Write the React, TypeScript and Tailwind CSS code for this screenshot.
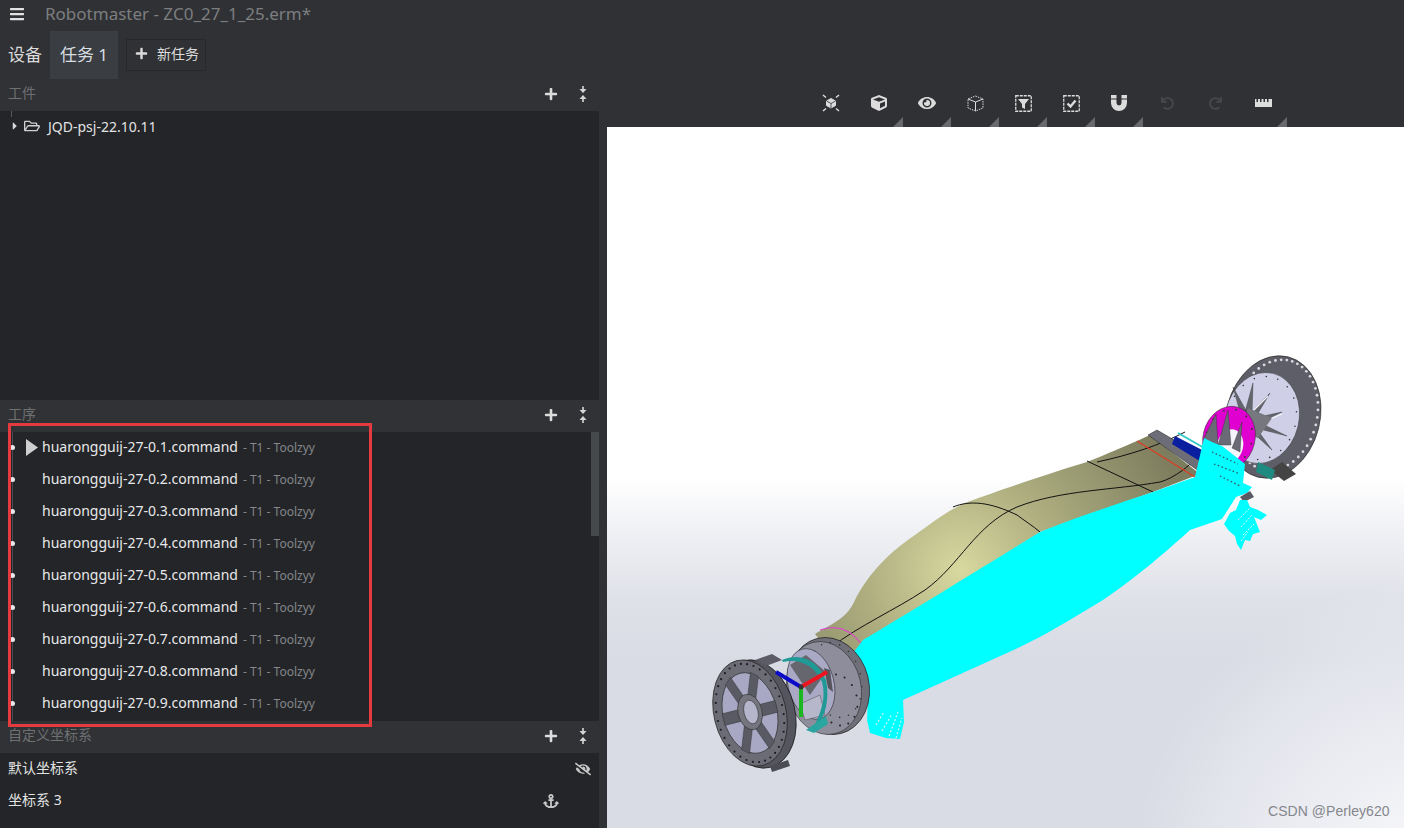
import React from "react";
import { FaBars, FaPlus, FaCube, FaEye, FaUndo, FaRedo, FaAnchor, FaEyeSlash, FaRegFolderOpen, FaCaretRight } from "react-icons/fa";

const FONT = "font-['Noto_Sans','Noto_Sans_CJK_SC',sans-serif]";

function Collapse() {
  return (
    <svg width="8" height="16" viewBox="0 0 8 16" fill="#d6d6d6">
      <rect x="3.2" y="0" width="1.6" height="3" />
      <path d="M0.5 3H7.5L4 7Z" />
      <path d="M0.5 13H7.5L4 9Z" />
      <rect x="3.2" y="13" width="1.6" height="3" />
    </svg>
  );
}

function PanelHeader({ title }: { title: string }) {
  return (
    <div className="flex h-8 shrink-0 items-center bg-[#303235] pb-0.5 pl-2">
      <span className="mb-1 text-[14px] text-[#6e7072]">{title}</span>
      <span className="ml-auto flex w-4 justify-center text-[14px] text-[#dcdcdc]">
        <FaPlus />
      </span>
      <span className="ml-4 mr-2 flex w-4 justify-center">
        <Collapse />
      </span>
    </div>
  );
}

function Row({ n, first }: { n: number; first: boolean }) {
  return (
    <div className="relative flex h-8 items-center pb-1 pl-[42px]">
      <span className="absolute left-[10px] top-[13px] h-[5px] w-[5px] rounded-full bg-[#e8e8e8]" />
      {first && (
        <svg className="absolute left-[26px] top-[7px]" width="12" height="17" viewBox="0 0 12 17">
          <path d="M0 0L12 8.5L0 17Z" fill="#cfcfcf" />
        </svg>
      )}
      <span className="text-[14px] text-[#e8e8e8]">huarongguij-27-0.{n}.command</span>
      <span className="ml-[5px] mt-1 text-[12px] text-[#85878a]">- T1 - Toolzyy</span>
    </div>
  );
}

const s = "#dcdcdc";
const tools: { el: React.ReactNode; tri: boolean }[] = [
  {
    tri: false,
    el: (
      <svg width="18" height="18" viewBox="0 0 18 18" fill="none" stroke={s}>
        <path d="M9 4.5L13.5 7V11.5L9 14L4.5 11.5V7Z" fill={s} />
        <path d="M4.5 7L9 9.5L13.5 7M9 9.5V14" stroke="#303235" strokeWidth="0.8" />
        <path d="M1 1L4 3.5M17 1L14 3.5M1 17L4 14.5M17 17L14 14.5" strokeWidth="1.5" />
      </svg>
    ),
  },
  { tri: true, el: <FaCube size={16} color={s} /> },
  { tri: true, el: <FaEye size={18} color={s} /> },
  {
    tri: true,
    el: (
      <svg width="17" height="17" viewBox="0 0 17 17" fill="none" stroke={s} strokeWidth="1">
        <path d="M8.5 1L16 4V13L8.5 16L1 13V4Z" strokeDasharray="1.5 1" />
        <path d="M1 4L8.5 7L16 4M8.5 7V16" />
      </svg>
    ),
  },
  {
    tri: true,
    el: (
      <svg width="17" height="17" viewBox="0 0 17 17" fill="none" stroke={s}>
        <rect x="0.75" y="0.75" width="15.5" height="15.5" strokeWidth="1.3" strokeDasharray="3 1" />
        <path d="M3 4H14L10 9V14L7 12.5V9Z" fill={s} stroke="none" />
      </svg>
    ),
  },
  {
    tri: true,
    el: (
      <svg width="17" height="17" viewBox="0 0 17 17" fill="none" stroke={s}>
        <rect x="0.75" y="0.75" width="15.5" height="15.5" strokeWidth="1.3" strokeDasharray="3 1" />
        <path d="M4.5 8.5L7.5 11.5L12.5 5.5" strokeWidth="2.4" />
      </svg>
    ),
  },
  {
    tri: true,
    el: (
      <svg width="18" height="16" viewBox="0 0 18 16" fill={s}>
        <path d="M1 0H6.5V3.5H1ZM11.5 0H17V3.5H11.5Z" />
        <path d="M1 4.5H6.5V8A2.5 2.5 0 0 0 11.5 8V4.5H17V8A8 8 0 0 1 1 8Z" />
      </svg>
    ),
  },
  { tri: false, el: <FaUndo size={13} color="#46484b" /> },
  { tri: false, el: <FaRedo size={13} color="#46484b" /> },
  {
    tri: true,
    el: (
      <svg width="17" height="8" viewBox="0 0 17 8" fill={s}>
        <path d="M0 0H1.5V3H3V0H5V3H6.5V0H8.5V3H10V0H12V3H13.5V0H17V8H0Z" />
      </svg>
    ),
  },
];

function ring(cx: number, cy: number, rx: number, ry: number, rot: number, n: number, r: number, fill: string) {
  const a = (rot * Math.PI) / 180;
  return Array.from({ length: n }, (_, i) => {
    const t = (i / n) * Math.PI * 2;
    const x = rx * Math.cos(t);
    const y = ry * Math.sin(t);
    return (
      <circle key={i} cx={cx + x * Math.cos(a) - y * Math.sin(a)} cy={cy + x * Math.sin(a) + y * Math.cos(a)} r={r} fill={fill} />
    );
  });
}

function Model() {
  return (
    <svg className="block h-full w-full" viewBox="607 127 797 701" preserveAspectRatio="none">
      <defs>
        <linearGradient id="bg" gradientUnits="userSpaceOnUse" x1="0" y1="127" x2="0" y2="828">
          <stop offset="0" stopColor="#ffffff" />
          <stop offset="0.5" stopColor="#ffffff" />
          <stop offset="0.58" stopColor="#eff0f4" />
          <stop offset="0.67" stopColor="#e0e2e9" />
          <stop offset="0.76" stopColor="#d9dbe5" />
          <stop offset="1" stopColor="#d9dbe5" />
        </linearGradient>
        <radialGradient id="corner" gradientUnits="userSpaceOnUse" cx="1430" cy="880" r="300">
          <stop offset="0" stopColor="#ffffff" stopOpacity="0.9" />
          <stop offset="0.45" stopColor="#f8f9fb" stopOpacity="0.6" />
          <stop offset="1" stopColor="#ffffff" stopOpacity="0" />
        </radialGradient>
        <radialGradient id="olive" gradientUnits="userSpaceOnUse" cx="960" cy="570" r="240">
          <stop offset="0" stopColor="#d8d8a0" />
          <stop offset="0.4" stopColor="#aeae80" />
          <stop offset="1" stopColor="#7c7c5e" />
        </radialGradient>
      </defs>
      <rect x="607" y="127" width="797" height="701" fill="url(#bg)" />
      <rect x="607" y="127" width="797" height="701" fill="url(#corner)" />

      {/* blade */}
      <path
        d="M815 634C835 622 847 618 855 600C866 578 885 555 915 535C932 523 945 512 965 503C1000 490 1050 473 1087 462C1105 455 1125 446 1137 441L1150 435L1200 474L1153 492L1040 532L970 580L863 645L840 665Z"
        fill="url(#olive)"
      />
      <path d="M830 648C860 625 895 610 925 590C960 565 975 525 1017 507C1060 490 1115 490 1160 482C1175 478 1190 465 1200 455" fill="none" stroke="#111" strokeWidth="1" />
      <path d="M953 507C970 500 990 502 1017 515C1025 521 1033 526 1040 532" fill="none" stroke="#111" strokeWidth="1" />
      <path d="M1087 461L1153 492" fill="none" stroke="#111" strokeWidth="1" />
      <path d="M1097 462C1130 455 1160 445 1185 432" fill="none" stroke="#111" strokeWidth="1" />
      <path d="M1137 441L1195 477" fill="none" stroke="#e03a20" strokeWidth="1.1" />
      <path d="M820 630C835 625 850 628 862 645" fill="none" stroke="#e040d0" strokeWidth="1.1" />

      {/* right hub */}
      <ellipse cx="1273" cy="417" rx="47" ry="62" transform="rotate(14 1273 417)" fill="#5e5e68" stroke="#222" strokeWidth="0.6" />
      {ring(1276, 415, 41, 56, 14, 46, 1.4, "#d8d8e0")}
      <ellipse cx="1262" cy="418" rx="37" ry="46" transform="rotate(14 1262 418)" fill="#cfcfe8" stroke="#333" strokeWidth="0.5" />
      {ring(1262, 418, 34, 42, 14, 18, 0.8, "#333")}
      <path d="M1233 387L1240 412L1248 414Z M1253 383L1245 412L1252 414Z M1270 393L1250 414L1254 420Z M1282 412L1254 418L1258 424Z M1287 436L1258 422L1256 428Z M1272 450L1254 425L1250 430Z" fill="#66666f" stroke="#333" strokeWidth="0.4" />
      <path d="M1252 412L1268 396M1258 424L1282 414" stroke="#f4f4fa" strokeWidth="1.2" />
      <path d="M1248 408L1272 418L1258 438L1240 430Z" fill="#77777f" />
      <path d="M1270 470L1282 462L1296 474L1284 481Z" fill="#444" />
      <path d="M1258 462L1275 470L1272 480L1256 472Z" fill="#1f8a80" />
      <ellipse cx="1229" cy="438" rx="26" ry="32" transform="rotate(14 1229 438)" fill="#e000d0" stroke="#333" strokeWidth="0.5" />
      <ellipse cx="1230" cy="446" rx="13" ry="17" transform="rotate(14 1230 446)" fill="#f4f4fa" />
      {ring(1229, 438, 23, 29, 14, 12, 0.9, "#333")}
      <path d="M1203 440L1216 414L1218 445ZM1218 445L1228 410L1231 445ZM1232 448L1242 422L1240 452Z" fill="#6a6a76" stroke="#333" strokeWidth="0.4" />
      <path d="M1148 435L1157 430L1212 462L1200 472Z" fill="#6d6d78" stroke="#222" strokeWidth="0.5" />
      <path d="M1175 436L1208 453L1203 463L1172 444Z" fill="#0a1ea0" />
      <path d="M1178 433L1206 449" stroke="#30c8c8" strokeWidth="2" />

      {/* toolpath */}
      <path
        d="M853 653L863 640C920 606 985 566 1040 532C1080 516 1120 503 1153 492L1195 477L1204 438L1212 442L1222 446L1245 464L1243 483L1252 487L1247 493L1236 497L1222 519L1190 530C1170 548 1140 575 1103 600C1070 620 1045 635 1020 647L903 700L904 722L900 739L886 738L870 733L867 720L868 697Z"
        fill="#00ffff"
      />
      <path d="M1212 452L1238 464M1214 464L1240 474M1220 476L1240 486" stroke="#34555a" strokeWidth="1.3" strokeDasharray="1.5 2.5" />
      <path d="M1240 497L1250 491L1254 497L1244 502Z" fill="#5a5a62" />
      <path d="M1240 500L1247 500L1250 507L1258 510L1267 515L1261 520L1254 517L1260 532L1253 534L1250 541L1245 540L1241 550L1237 544L1235 536L1229 531L1224 524L1230 513L1236 510Z" fill="#00ffff" />
      <path d="M1238 520L1250 508M1241 527L1252 515M1243 535L1254 524M1241 541L1248 532" stroke="#e8fbfc" strokeWidth="1" strokeDasharray="2 1.5" />
      <path d="M876 725L884 712M882 731L892 714M889 736L898 712M896 738L902 718" stroke="#dcf4f8" strokeWidth="1.2" strokeDasharray="2 2" />

      {/* middle hub */}
      <ellipse cx="829" cy="686" rx="40" ry="49" transform="rotate(-14 829 686)" fill="#6f6f7a" stroke="#222" strokeWidth="0.7" />
      <ellipse cx="824" cy="688" rx="37" ry="47" transform="rotate(-14 824 688)" fill="#8d8d9c" stroke="#222" strokeWidth="0.5" />
      {ring(838, 700, 19, 26, -14, 14, 1, "#222")}
      {ring(835, 680, 26, 38, -14, 18, 0.8, "#333")}
      <ellipse cx="811" cy="684" rx="23" ry="36" transform="rotate(-14 811 684)" fill="#a9a9c6" stroke="#333" strokeWidth="0.6" />
      <path d="M790 665L806 655L826 672L810 695Z" fill="#66666f" />
      <path d="M800 704L820 695L825 715L805 720Z" fill="#b7b7cc" stroke="#333" strokeWidth="0.4" />
      <path d="M782 660C800 652 818 660 826 680C830 700 825 716 816 729L814 727C822 710 826 697 822 682C815 666 800 658 783 662Z" fill="#1f9a96" />
      <path d="M806 730L826 716L828 724L814 733Z" fill="#2aa5a0" />
      <path d="M824 668L828 688L833 692L830 670Z" fill="#55555e" />

      {/* front hub */}
      <ellipse cx="757" cy="714" rx="38" ry="55" transform="rotate(-14 757 714)" fill="#55555f" stroke="#111" strokeWidth="0.7" />
      <ellipse cx="750" cy="713" rx="36" ry="54" transform="rotate(-14 750 713)" fill="#6c6c76" stroke="#222" strokeWidth="0.7" />
      {ring(750, 713, 33, 50, -14, 34, 1.1, "#1c1c22")}
      <ellipse cx="750" cy="713" rx="27" ry="41" transform="rotate(-14 750 713)" fill="#a8a8c4" stroke="#222" strokeWidth="0.6" />
      <g transform="rotate(-14 750 713)">
        {[0, 60, 120].map((d) => (
          <path key={d} d="M744 671H756V755H744Z" fill="#5a5a64" stroke="#222" strokeWidth="0.4" transform={`translate(750 713) scale(0.65 1) rotate(${d + 30}) translate(-750 -713)`} />
        ))}
      </g>
      <ellipse cx="750" cy="712" rx="12" ry="18" transform="rotate(-14 750 712)" fill="#75757f" stroke="#222" strokeWidth="0.5" />
      <ellipse cx="751" cy="712" rx="7" ry="12" transform="rotate(-14 751 712)" fill="#b5b5cc" stroke="#222" strokeWidth="0.5" />
      <path d="M770 766L788 760L790 766L772 772Z" fill="#4c4c55" />
      <path d="M755 660L772 654L782 660L766 666Z" fill="#5c5c66" />

      {/* axes */}
      <line x1="801" y1="687" x2="801" y2="717" stroke="#19b81e" strokeWidth="4" />
      <line x1="801" y1="687" x2="776" y2="672" stroke="#0a0ac8" strokeWidth="4" />
      <line x1="801" y1="687" x2="827" y2="672" stroke="#ee1520" strokeWidth="4" />
      <circle cx="801" cy="687" r="2.5" fill="#333" />

      <text x="1268" y="816" fontFamily="Liberation Sans" fontSize="14" fill="#85878c" letterSpacing="0.05">
        CSDN @Perley620
      </text>
    </svg>
  );
}

export default function App() {
  return (
    <div className={`relative flex h-[828px] w-[1404px] flex-col overflow-hidden bg-[#303134] ${FONT}`}>
      <header className="flex h-[31px] shrink-0 items-center pb-[3px] pl-[9px]">
        <FaBars size={16} color="#e2e2e2" />
        <span className="ml-5 text-[17px] text-[#7c7e80]">Robotmaster - ZC0_27_1_25.erm*</span>
      </header>
      <div className="flex min-h-0 flex-1">
        <div className="flex w-[607px] shrink-0 flex-col">
          <nav className="flex h-12 shrink-0 items-center pl-2 text-[17px] text-[#dcdcdc]">
            <span>设备</span>
            <span className="ml-2 flex h-12 w-[68px] items-center justify-center bg-[#3a3e42] text-[#d8dde2]">任务 1</span>
            <button className="ml-2 flex h-8 w-20 items-center border border-[#26282a] pb-1 pl-2 text-[14px] text-[#dcdcdc]">
              <FaPlus size={13} />
              <span className="ml-[9px]">新任务</span>
            </button>
          </nav>
          <div className="flex min-h-0 w-[599px] flex-1 flex-col">
            <PanelHeader title="工件" />
            <div className="h-[289px] shrink-0 bg-[#232528]">
              <div className="relative flex h-8 items-center pb-0.5 pl-[9px] text-[14px] text-[#e2e2e2]">
                <span className="absolute left-[11px] top-0 h-1.5 w-px bg-[#55585b]" />
                <FaCaretRight size={12} color="#d8d8d8" />
                <FaRegFolderOpen size={16} color="#d0d0d0" className="ml-[3px]" />
                <span className="ml-2">JQD-psj-22.10.11</span>
              </div>
            </div>
            <PanelHeader title="工序" />
            <div className="relative flex h-[289px] shrink-0 bg-[#232528]">
              <span className="absolute bottom-0 left-3 top-0 w-px bg-[#4a4c4f]" />
              <div className="relative flex-1">
                {[1, 2, 3, 4, 5, 6, 7, 8, 9].map((n) => (
                  <Row key={n} n={n} first={n === 1} />
                ))}
              </div>
              <div className="h-[104px] w-2 bg-[#46494c]" />
            </div>
            <PanelHeader title="自定义坐标系" />
            <div className="min-h-0 flex-1 bg-[#232528] text-[14px] text-[#e2e2e2]">
              <div className="flex h-8 items-center pl-2">
                <span className="mb-1">默认坐标系</span>
                <span className="ml-auto mr-2"><FaEyeSlash size={16} color="#c8c8c8" /></span>
              </div>
              <div className="flex h-8 items-center pl-2">
                <span className="mb-1">坐标系 3</span>
                <span className="ml-auto mr-10"><FaAnchor size={16} color="#c8c8c8" /></span>
              </div>
            </div>
          </div>
        </div>
        <div className="flex min-w-0 flex-1 flex-col">
          <div className="flex h-24 shrink-0 items-end pl-[200px]">
            {tools.map((t, i) => (
              <div key={i} className="relative flex h-[42px] w-12 items-center justify-center pb-[6px]">
                {t.el}
                {t.tri && (
                  <svg className="absolute bottom-0 right-0" width="10" height="10" viewBox="0 0 10 10">
                    <path d="M10 0V10H0Z" fill="#68696c" />
                  </svg>
                )}
              </div>
            ))}
          </div>
          <div className="min-h-0 flex-1">
            <Model />
          </div>
        </div>
      </div>
      <div className="absolute left-2 top-[423px] h-[304px] w-[364px] border-[3px] border-[#e53a40]" />
    </div>
  );
}
